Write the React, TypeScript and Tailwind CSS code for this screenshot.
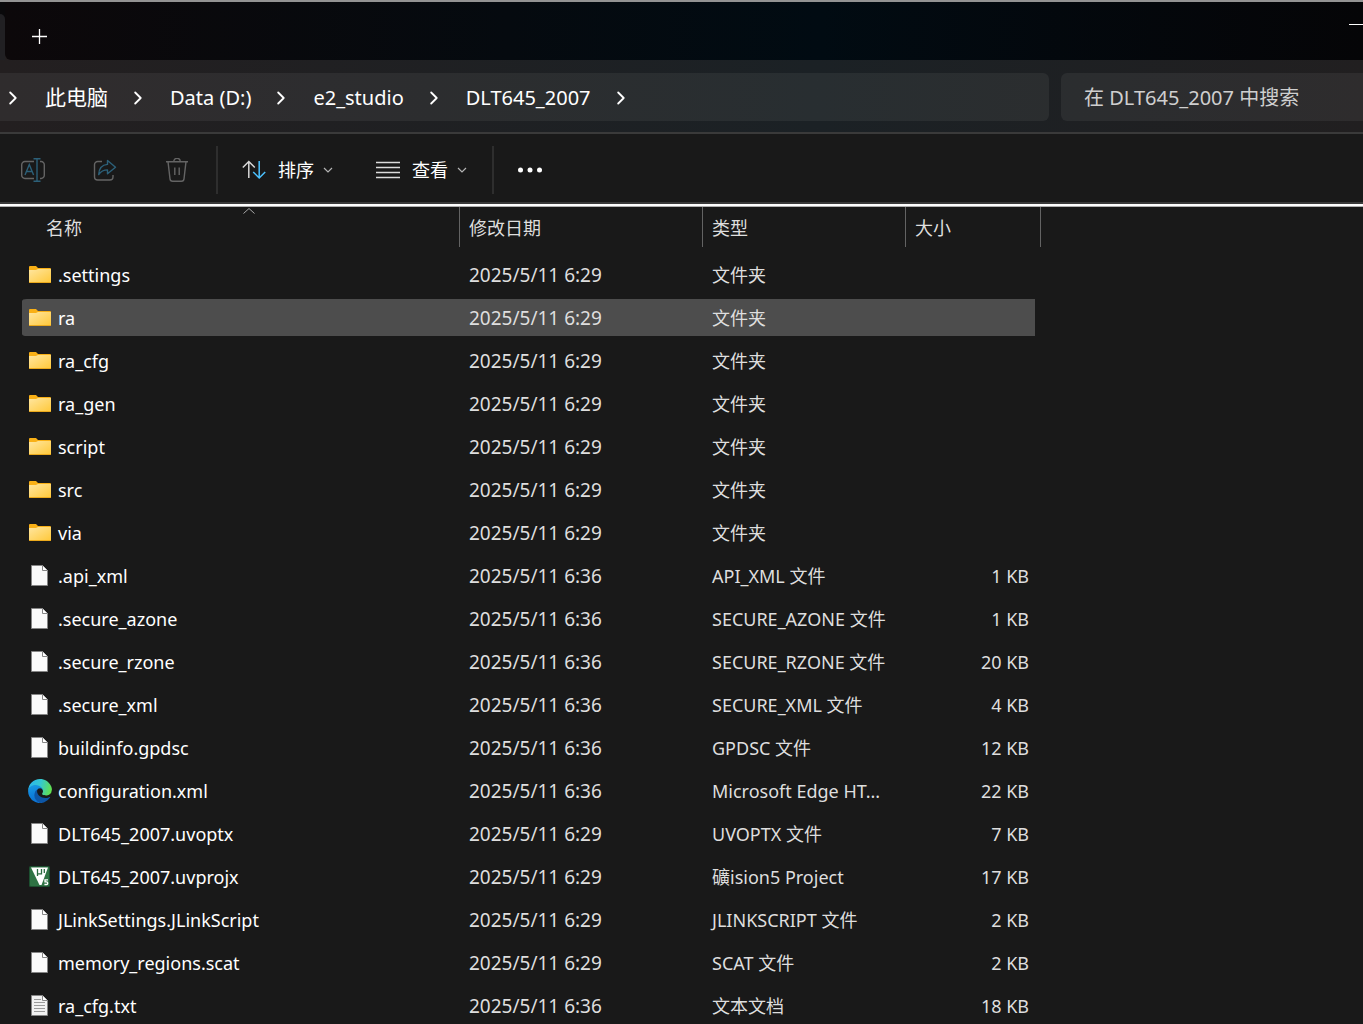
import { useState } from 'react';
import type { ReactNode } from 'react';

type FileKind = 'folder' | 'file' | 'text' | 'edge' | 'keil';

interface Entry {
    name: string;
    date: string;
    type: string;
    size?: string;
    kind: FileKind;
}

const entries: Entry[] = [
    { name: '.settings', date: '2025/5/11 6:29', type: '文件夹', kind: 'folder' },
    { name: 'ra', date: '2025/5/11 6:29', type: '文件夹', kind: 'folder' },
    { name: 'ra_cfg', date: '2025/5/11 6:29', type: '文件夹', kind: 'folder' },
    { name: 'ra_gen', date: '2025/5/11 6:29', type: '文件夹', kind: 'folder' },
    { name: 'script', date: '2025/5/11 6:29', type: '文件夹', kind: 'folder' },
    { name: 'src', date: '2025/5/11 6:29', type: '文件夹', kind: 'folder' },
    { name: 'via', date: '2025/5/11 6:29', type: '文件夹', kind: 'folder' },
    { name: '.api_xml', date: '2025/5/11 6:36', type: 'API_XML 文件', size: '1 KB', kind: 'file' },
    { name: '.secure_azone', date: '2025/5/11 6:36', type: 'SECURE_AZONE 文件', size: '1 KB', kind: 'file' },
    { name: '.secure_rzone', date: '2025/5/11 6:36', type: 'SECURE_RZONE 文件', size: '20 KB', kind: 'file' },
    { name: '.secure_xml', date: '2025/5/11 6:36', type: 'SECURE_XML 文件', size: '4 KB', kind: 'file' },
    { name: 'buildinfo.gpdsc', date: '2025/5/11 6:36', type: 'GPDSC 文件', size: '12 KB', kind: 'file' },
    { name: 'configuration.xml', date: '2025/5/11 6:36', type: 'Microsoft Edge HT...', size: '22 KB', kind: 'edge' },
    { name: 'DLT645_2007.uvoptx', date: '2025/5/11 6:29', type: 'UVOPTX 文件', size: '7 KB', kind: 'file' },
    { name: 'DLT645_2007.uvprojx', date: '2025/5/11 6:29', type: '礦ision5 Project', size: '17 KB', kind: 'keil' },
    { name: 'JLinkSettings.JLinkScript', date: '2025/5/11 6:29', type: 'JLINKSCRIPT 文件', size: '2 KB', kind: 'file' },
    { name: 'memory_regions.scat', date: '2025/5/11 6:29', type: 'SCAT 文件', size: '2 KB', kind: 'file' },
    { name: 'ra_cfg.txt', date: '2025/5/11 6:36', type: '文本文档', size: '18 KB', kind: 'text' },
];

const crumbs = ['此电脑', 'Data (D:)', 'e2_studio', 'DLT645_2007'];

const FolderIcon = () => (
    <svg width="24" height="24" viewBox="0 0 24 24">
        <defs>
            <linearGradient id="folder" x1="0" y1="0" x2="1" y2="1">
                <stop offset="0" stopColor="#ffe6a0" />
                <stop offset="1" stopColor="#ffc93c" />
            </linearGradient>
        </defs>
        <path d="M1 4a1 1 0 0 1 1-1h6l2 2h12a1 1 0 0 1 1 1v4H1z" fill="#f9b016" />
        <path d="M1 7h7l2-1h13v13H1z" fill="url(#folder)" />
        <path d="M1 19h22v.5a.5.5 0 0 1-.5.5h-21a.5.5 0 0 1-.5-.5z" fill="#eba91c" />
    </svg>
);

const PageIcon = ({ lines = false }: { lines?: boolean }) => (
    <svg width="24" height="24" viewBox="0 0 24 24">
        <path d="M3.5 1.5h11l5 5v15h-16z" fill={lines ? '#f1f1f1' : '#fafafa'} stroke="#858585" />
        <path d="M14.5 1.5v5h5" fill="#fff" stroke="#858585" />
        {lines && <path d="M6 5.5h7M6 8.5h11M6 11.5h11M6 14.5h11M6 17.5h11" stroke="#9a9a9a" />}
    </svg>
);

const EdgeIcon = () => (
    <svg width="24" height="24" viewBox="4 2 257 258">
        <defs>
            <linearGradient id="edgeTop" x1="0" y1="0.3" x2="1" y2="0.5">
                <stop offset="0" stopColor="#2ab6ee" />
                <stop offset="0.5" stopColor="#35c8cf" />
                <stop offset="1" stopColor="#62e04d" />
            </linearGradient>
            <linearGradient id="edgeMid" x1="0.3" y1="0" x2="0.5" y2="1">
                <stop offset="0" stopColor="#1b9de2" />
                <stop offset="0.5" stopColor="#0f83dc" />
                <stop offset="1" stopColor="#0b6fd0" />
            </linearGradient>
        </defs>
        <path d="M235.68 195.46a93.73 93.73 0 0 1-10.54 4.71 101.87 101.87 0 0 1-35.9 6.46c-47.32 0-88.54-32.55-88.54-74.32A31.48 31.48 0 0 1 117.13 105c-42.8 1.8-53.8 46.4-53.8 72.53 0 73.88 68.09 81.37 82.76 81.37 7.91 0 19.84-2.3 27-4.56l1.31-.44a128.34 128.34 0 0 0 66.6-52.8 4 4 0 0 0-5.32-5.64z" fill="#0d56a6" />
        <path d="M110.34 246.34A79.2 79.2 0 0 1 87.6 225a80.72 80.72 0 0 1 29.53-120c3.12-1.47 8.45-4.13 15.54-4a32.35 32.35 0 0 1 25.69 13 31.88 31.88 0 0 1 6.36 18.66c0-.21 24.46-79.6-80-79.6-43.9 0-80 41.66-80 78.21a130.15 130.15 0 0 0 12.11 56 128 128 0 0 0 156.38 67.11 75.55 75.55 0 0 1-62.87-8.04z" fill="url(#edgeMid)" />
        <path d="M157 156.8c-.81 1.05-3.3 2.5-3.3 5.66 0 2.61 1.7 5.12 4.72 7.23 14.38 10 41.49 8.68 41.56 8.68a59.56 59.56 0 0 0 30.27-8.35 61.38 61.38 0 0 0 30.43-52.88c.26-22.41-8-37.31-11.34-43.91C228.1 31.8 182.4 3 132.7 3A128 128 0 0 0 4.7 132.2c.48-36.54 36.8-66.05 80-66.05 3.5 0 23.46.34 42 10.07 16.34 8.58 24.9 18.94 30.85 29.21 6.18 10.67 7.28 24.15 7.28 29.52s-2.74 15.27-7.83 21.85z" fill="url(#edgeTop)" />
    </svg>
);

const KeilIcon = () => (
    <svg width="24" height="24" viewBox="0 0 24 24">
        <rect x="1" y="1" width="21" height="21" rx="1.5" fill="#1d4f30" />
        <rect x="2" y="2" width="19" height="19" rx="1" fill="#2f7344" />
        <path d="M3 2.500h17L13.500 20h-2z" fill="#fff" />
        <path d="M9.500 4v7M13.500 4v5.500M9.500 8.800h4.500M16.300 4v4" stroke="#2a6b40" strokeWidth="1.300" fill="none" />
        <path d="M20.500 14h-4v6.500h4z" fill="#2f7344" />
        <path d="M20 14.800h-3v2h1.400a1.300 1.300 0 0 1 0 2.700h-2" stroke="#fff" strokeWidth="1.300" fill="none" />
    </svg>
);

const icons: Record<FileKind, ReactNode> = {
    folder: <FolderIcon />,
    file: <PageIcon />,
    text: <PageIcon lines />,
    edge: <EdgeIcon />,
    keil: <KeilIcon />,
};

const CrumbArrow = () => (
    <svg width="8" height="14" viewBox="0 0 8 14" fill="none" stroke="#fff" strokeWidth="1.8" className="shrink-0">
        <path d="M1.2 1.5 6.7 7l-5.500 5.500" strokeLinecap="round" strokeLinejoin="round" />
    </svg>
);

const DownArrow = () => (
    <svg width="10" height="6" viewBox="0 0 10 6" fill="none" stroke="#b4b4b4" strokeWidth="1.2">
        <path d="m1 1 4 4 4-4" />
    </svg>
);

const RenameIcon = () => (
    <svg width="24" height="24" viewBox="0 0 24 24" fill="none" strokeWidth="1.4">
        <path d="M13 3.500H4A3.200 3.200 0 0 0 .7 6.700v10.600A3.200 3.200 0 0 0 4 20.500h9M19 3.500h1a3.200 3.200 0 0 1 3.300 3.200v10.600a3.200 3.200 0 0 1-3.300 3.200h-1" stroke="#646464" />
        <path d="M12.500.7h7M16 .7v22.600M12.500 23.300h7M4 17 8.300 6.500l4.300 10.500M5.500 13.500h5.600" stroke="#2c6079" />
    </svg>
);

const ShareIcon = () => (
    <svg width="24" height="24" viewBox="0 0 24 24" fill="none" strokeWidth="1.4" strokeLinejoin="round">
        <path d="M9 3.500H4.700a3.200 3.200 0 0 0-3.200 3.200v12.100A3.200 3.200 0 0 0 4.700 22h12.100a3.200 3.200 0 0 0 3.200-3.200V17" stroke="#646464" />
        <path d="M14.500 2.500 22.500 9.200l-8 6.600v-3.900c-4 0-6.500 1.300-8.800 4.700.3-6 3.300-9.800 8.800-10.200z" stroke="#2c6079" />
    </svg>
);

const TrashIcon = () => (
    <svg width="24" height="24" viewBox="0 0 24 24" fill="none" stroke="#646464" strokeWidth="1.4">
        <path d="M1 3.700h22M8.800 3.500a3.200 3.200 0 0 1 6.400 0M3 3.700l2 17.200a2.600 2.600 0 0 0 2.600 2.400h8.800a2.600 2.600 0 0 0 2.600-2.400l2-17.200M9.800 9.500v7.500M14.200 9.500v7.500" />
    </svg>
);

const SortIcon = () => (
    <svg width="24" height="20" viewBox="0 0 24 20" fill="none" strokeWidth="1.5">
        <path d="M6.800 18V1.500M.8 7.500l6-6 6 6" stroke="#d8d8d8" />
        <path d="M17.200 1v17M11.200 12l6 6 6-6" stroke="#4cc2ff" />
    </svg>
);

const ViewIcon = () => (
    <svg width="24" height="18" viewBox="0 0 24 18" stroke="#dcdcdc" strokeWidth="1.4">
        <path d="M0 1.500h24M0 6.500h24M0 11.500h24M0 16.500h24" />
    </svg>
);

const Separator = () => <div className="h-12 w-0.5 shrink-0 bg-[#2e2e2e]" />;

const columns = [
    { label: '名称', pad: 'pl-6' },
    { label: '修改日期', pad: 'pl-[9px]' },
    { label: '类型', pad: 'pl-[9px]' },
    { label: '大小', pad: 'pl-[9px]' },
];

const App = () => {
    const [active, setActive] = useState('ra');

    return (
        <div className="flex h-screen flex-col overflow-hidden bg-[#191919] font-['Noto_Sans','Noto_Sans_CJK_SC',sans-serif] text-white">
            <header className="shrink-0 border-t-2 border-[#939393] bg-linear-to-r from-[#231f20] via-[#1b2125] via-60% to-[#211f20]">
                <div className="flex h-[58px]">
                    <div className="w-[5px] bg-[#0a090b] pt-3">
                        <div className="h-full rounded-tr-[5px] bg-[#212023]" />
                    </div>
                    <div className="flex flex-1 items-start justify-between rounded-bl-md bg-linear-to-r from-[#0c080a] via-[#010b12] via-60% to-[#050507]">
                        <button aria-label="新建标签页" className="mt-[27px] ml-[27px]">
                            <svg width="15" height="15" viewBox="0 0 15 15" stroke="#fff" strokeWidth="1.3">
                                <path d="M7.500 0v15M0 7.500h15" />
                            </svg>
                        </button>
                        <button aria-label="最小化" className="mt-3 h-5 w-3.5">
                            <span className="block h-px bg-white" />
                        </button>
                    </div>
                </div>

                <div className="flex h-[72px] items-center gap-3 pt-px">
                    <nav className="flex h-12 flex-1 items-center rounded-r-md bg-white/6 pt-0.5 pl-[9px] text-[20px]">
                        <CrumbArrow />
                        {crumbs.map((c) => (
                            <div key={c} className="flex items-center">
                                <button className={`mr-[26px] ml-7 whitespace-nowrap ${c === '此电脑' ? 'text-[21px]' : ''}`}>{c}</button>
                                <CrumbArrow />
                            </div>
                        ))}
                    </nav>
                    <input
                        type="text"
                        aria-label="搜索"
                        placeholder="在 DLT645_2007 中搜索"
                        className="h-12 w-[302px] rounded-l-md bg-white/6 pt-0.5 pl-[23px] text-[20px] outline-none placeholder:text-[#cfcfcf]"
                    />
                </div>
            </header>

            <div className="flex h-[72px] shrink-0 items-center border-y-2 border-[#3a3a3a] pt-1 pl-[21px] text-[18px]">
                <button aria-label="重命名"><RenameIcon /></button>
                <button aria-label="共享" className="ml-12"><ShareIcon /></button>
                <button aria-label="删除" className="mr-[27px] ml-12"><TrashIcon /></button>
                <Separator />
                <button className="ml-6 flex items-center">
                    <SortIcon />
                    <span className="mr-[9px] ml-3">排序</span>
                    <DownArrow />
                </button>
                <button className="mr-[25px] ml-[43px] flex items-center">
                    <ViewIcon />
                    <span className="mr-[9px] ml-3">查看</span>
                    <DownArrow />
                </button>
                <Separator />
                <button aria-label="查看更多" className="ml-6">
                    <svg width="24" height="6" viewBox="0 0 24 6" fill="#fff">
                        <circle cx="2.500" cy="3" r="2.500" />
                        <circle cx="12" cy="3" r="2.500" />
                        <circle cx="21.500" cy="3" r="2.500" />
                    </svg>
                </button>
            </div>
            <div className="h-[3px] shrink-0 border-b border-[#b0b0b0] bg-white" />

            <main className="flex-1 pl-[22px]">
                <table className="w-[1019px] table-fixed border-separate border-spacing-0 text-left text-[18px]">
                    <colgroup>
                        <col className="w-[438px]" />
                        <col className="w-[243px]" />
                        <col className="w-[203px]" />
                        <col className="w-[135px]" />
                    </colgroup>
                    <thead>
                        <tr className="h-[46px]">
                            {columns.map((col, i) => (
                                <th key={col.label} className="p-0 align-top font-normal text-[#dedede]">
                                    <div className={`relative flex h-10 items-center border-r border-[#636363] pt-0.5 ${col.pad}`}>
                                        {i === 0 && (
                                            <svg width="12" height="6" viewBox="0 0 12 6" fill="none" stroke="#a8a8a8" className="absolute top-px left-[221px]">
                                                <path d="m.5 5.500 5.500-5 5.500 5" />
                                            </svg>
                                        )}
                                        {col.label}
                                    </div>
                                </th>
                            ))}
                        </tr>
                    </thead>
                    <tbody>
                        {entries.map((e) => (
                            <tr
                                key={e.name}
                                onClick={() => setActive(e.name)}
                                className={`h-[43px] whitespace-nowrap text-[#dedede] *:border-y-[3px] *:border-transparent *:bg-clip-padding *:p-0 ${active === e.name ? '*:bg-[#4d4d4d]' : ''}`}
                            >
                                <td className="rounded-l-[5px]">
                                    <div className="flex items-center gap-1.5 pl-1.5 text-white">
                                        {icons[e.kind]}
                                        <span className="pt-0.5">{e.name}</span>
                                    </div>
                                </td>
                                <td><div className="pt-0.5 pl-[9px] text-[19px]">{e.date}</div></td>
                                <td><div className="pt-0.5 pl-[9px]">{e.type}</div></td>
                                <td className="rounded-r-[5px] border-r-[6px] text-right"><div className="pt-0.5 pr-1.5">{e.size}</div></td>
                            </tr>
                        ))}
                    </tbody>
                </table>
            </main>
        </div>
    );
};

export default App;
